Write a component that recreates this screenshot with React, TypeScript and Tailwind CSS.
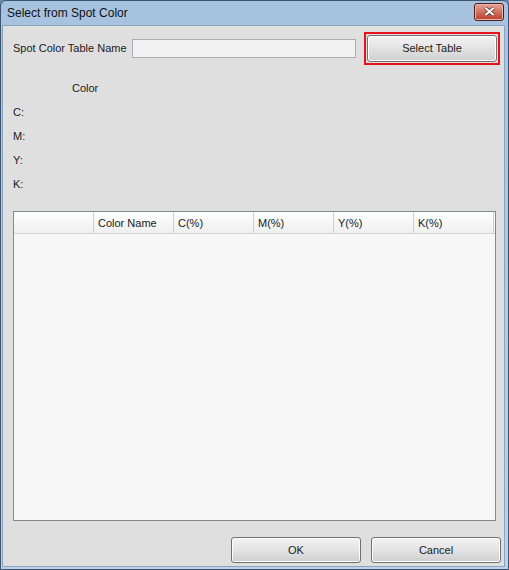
import React from 'react';

const font = { fontFamily: '"Liberation Sans", Arial, sans-serif' };

function WinButton({ label, className = '' }: { label: string; className?: string }) {
  return (
    <div
      className={`flex items-center justify-center rounded-[3px] border border-[#707070] bg-gradient-to-b from-[#f2f2f2] via-[#e3e3e3] to-[#cfcfcf] text-[11px] text-[#1a1a1a] shadow-[inset_0_0_0_1px_#fcfcfc] ${className}`}
    >
      {label}
    </div>
  );
}

const columns = ['', 'Color Name', 'C(%)', 'M(%)', 'Y(%)', 'K(%)'];

export default function App() {
  return (
    <div style={font} className="h-[570px] w-[509px] overflow-hidden bg-[#6f8aa8]">
      <div className="flex h-full w-full flex-col rounded-t-[6px] border border-[#3c5573] bg-gradient-to-b from-[#a7c2df] to-[#bdd2e9]">
        {/* Title bar */}
        <div className="flex h-[24px] shrink-0 items-center justify-between pl-[6px] pr-[4px]">
          <span className="text-[12px] text-[#111]">Select from Spot Color</span>
          <div className="mb-[3px] flex h-[18px] w-[30px] items-center justify-center rounded-[3px] border border-[#4a1e1a] bg-gradient-to-b from-[#e5a599] via-[#d0705f] to-[#b83a28] shadow-[inset_0_0_0_1px_#eab5ab]">
            <svg width="11" height="9" viewBox="0 0 11 9">
              <path d="M1.5 1 L9.5 8 M9.5 1 L1.5 8" stroke="#5a2a22" strokeWidth="3.6" />
              <path d="M1.5 1 L9.5 8 M9.5 1 L1.5 8" stroke="#ffffff" strokeWidth="2.2" />
            </svg>
          </div>
        </div>

        {/* Client area */}
        <div className="mx-[1px] mb-[2px] mr-[3px] flex flex-1 flex-col border border-[#8aa3bf] bg-[#dfdfdf] text-[11px] text-[#1a1a1a]">
          <div className="flex items-center pl-[10px] pt-[6px]">
            <span className="w-[119px]">Spot Color Table Name</span>
            <div className="h-[19px] w-[224px] border border-[#abadb3] bg-[#f1f1f1]" />
            <div className="ml-[8px] border-2 border-[#e8121c] p-[1px]">
              <WinButton label="Select Table" className="h-[27px] w-[130px]" />
            </div>
          </div>

          <div className="flex flex-col pl-[10px] pt-[15px]">
            <span className="pl-[59px] leading-[16px]">Color</span>
            <div className="mt-[8px] flex flex-col gap-[8px] leading-[16px]">
              <span>C:</span>
              <span>M:</span>
              <span>Y:</span>
              <span>K:</span>
            </div>
          </div>

          {/* Table */}
          <div className="ml-[10px] mt-[19px] flex h-[310px] w-[483px] flex-col border border-[#828790] bg-[#f7f7f7]">
            <div className="flex h-[22px] border-b border-[#d5d5d5] bg-gradient-to-b from-[#ffffff] to-[#efefef]">
              {columns.map((c, i) => (
                <div
                  key={i}
                  className="flex w-[80px] items-center border-r border-[#d0d0d0] pl-[4px] pt-[1px]"
                >
                  {c}
                </div>
              ))}
            </div>
          </div>

          <div className="mt-[16px] flex justify-end gap-[10px] pr-[3px]">
            <WinButton label="OK" className="h-[26px] w-[130px]" />
            <WinButton label="Cancel" className="h-[26px] w-[130px]" />
          </div>
        </div>
      </div>
    </div>
  );
}
